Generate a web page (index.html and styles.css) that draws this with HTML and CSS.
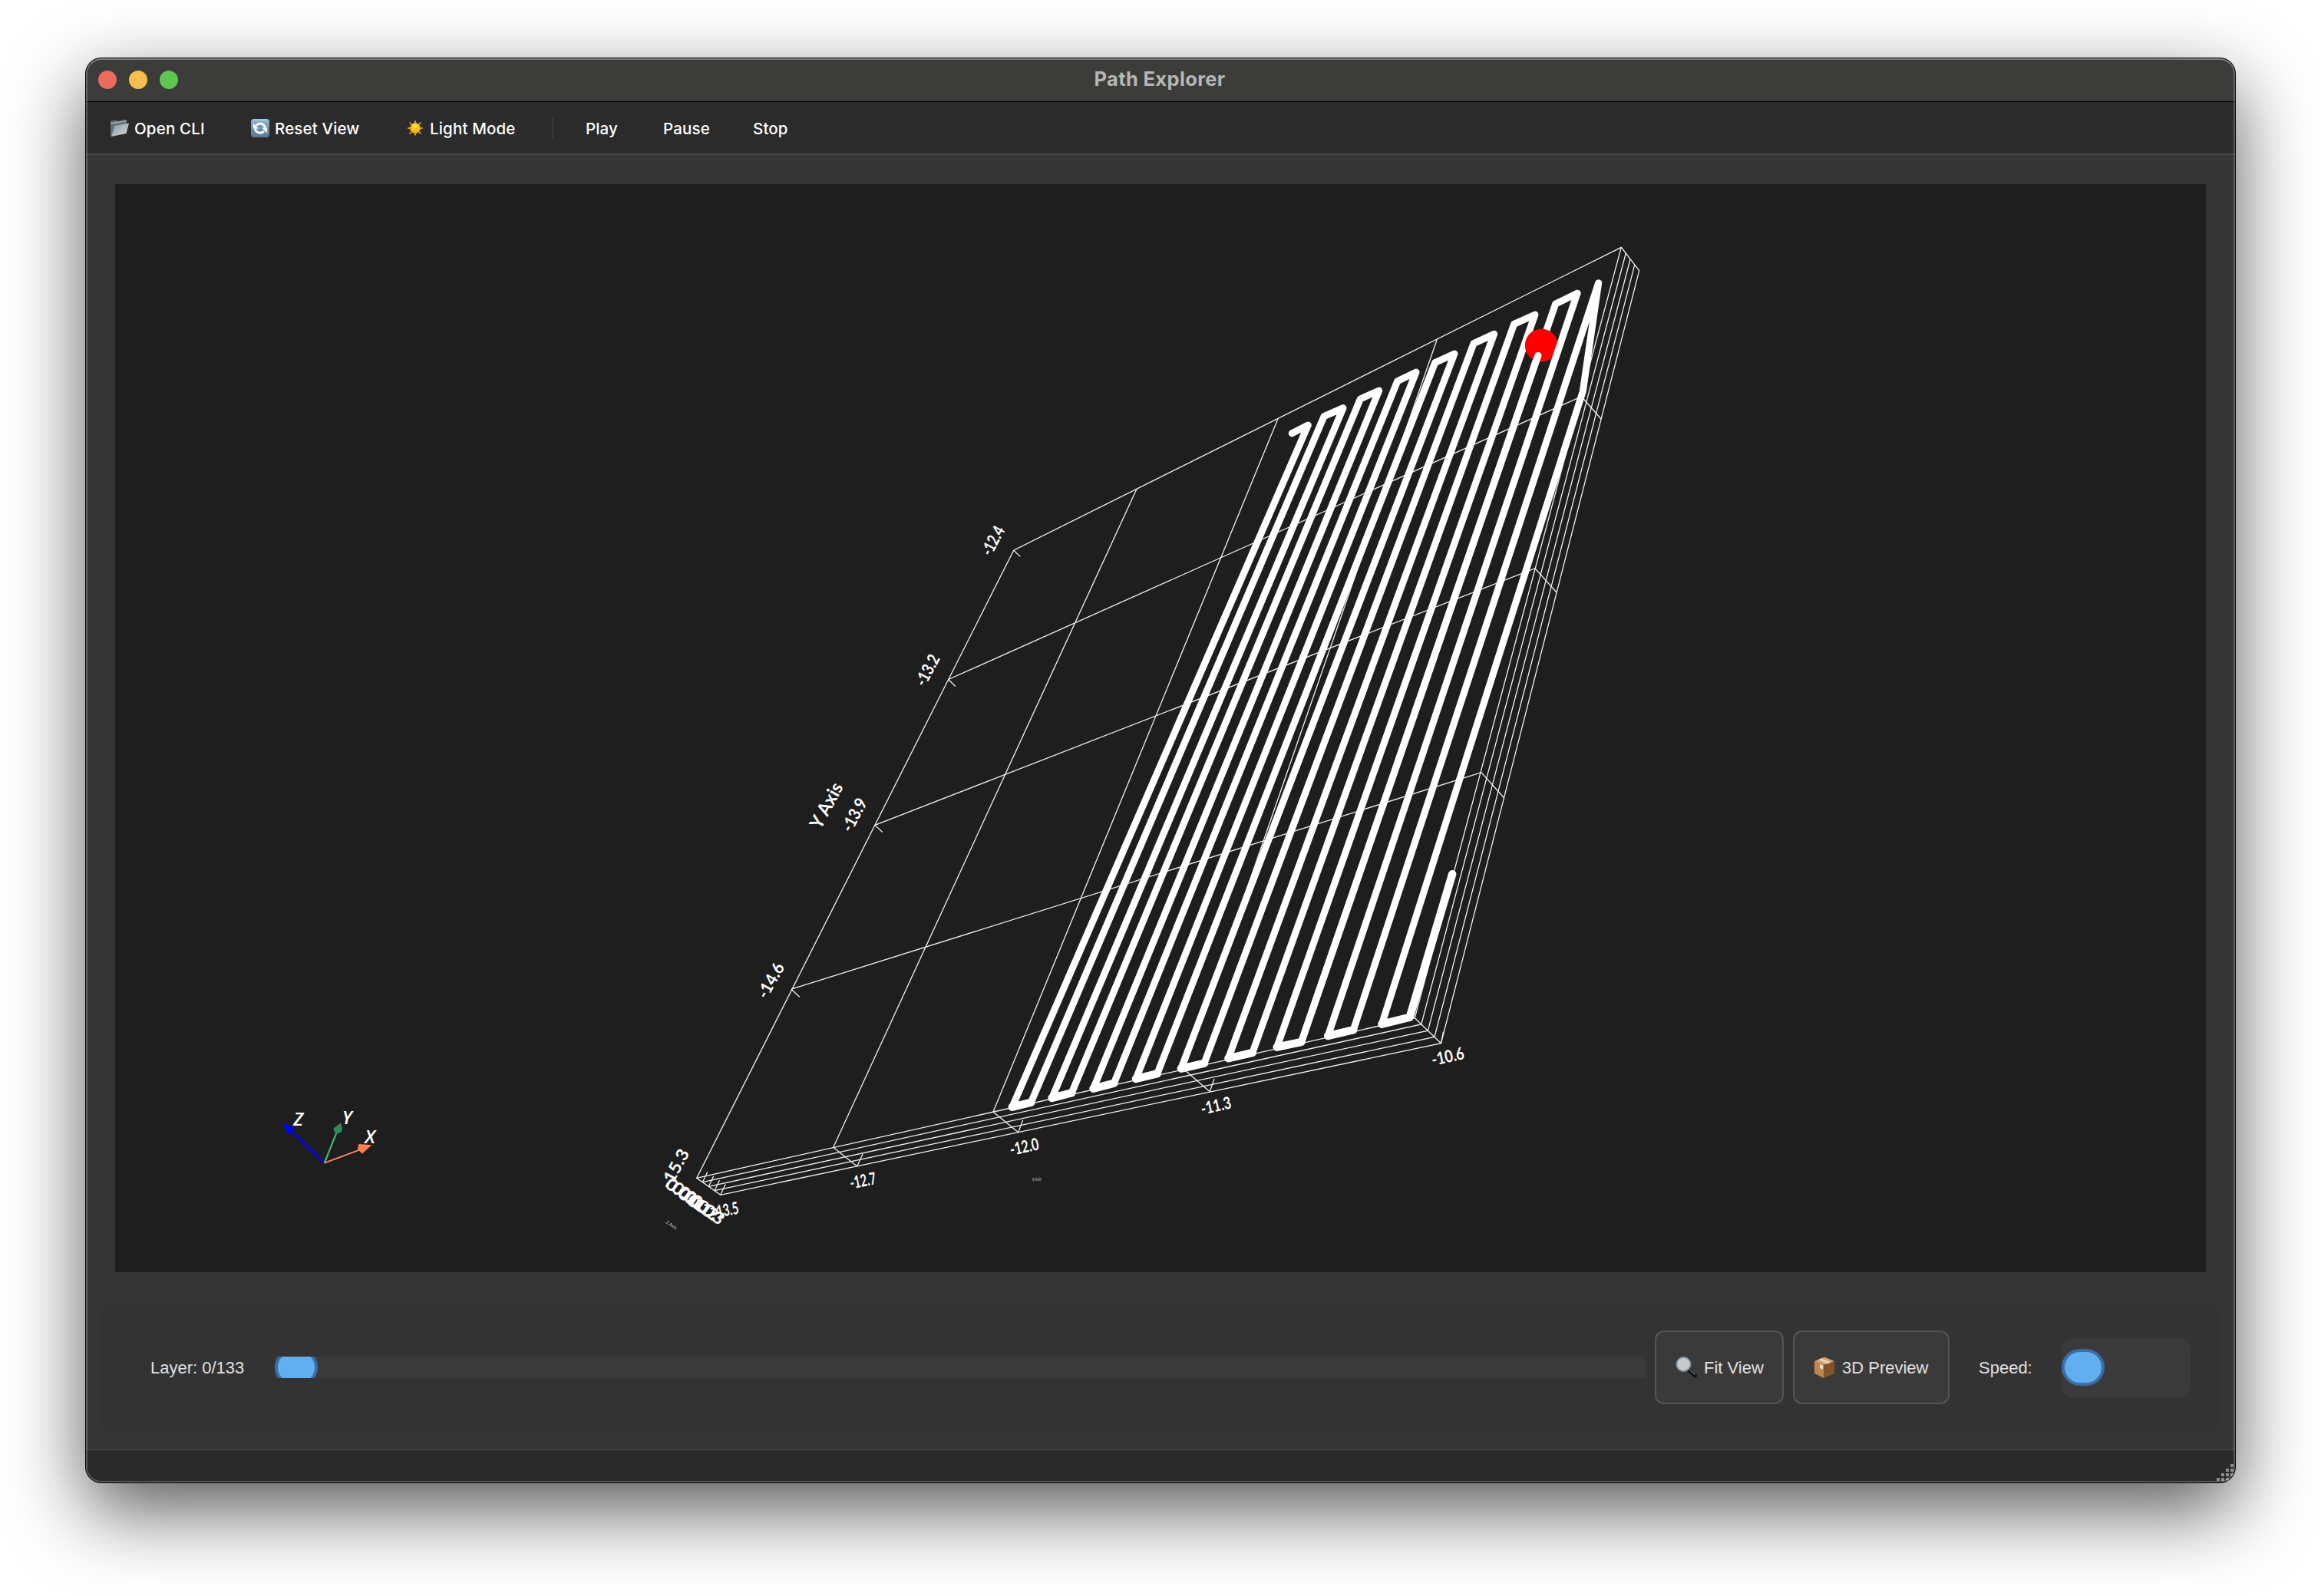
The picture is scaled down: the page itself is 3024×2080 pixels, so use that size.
FILE: index.html
```html
<!DOCTYPE html>
<html lang="en">
<head>
<meta charset="utf-8">
<title>Path Explorer</title>
<link rel="stylesheet" href="styles.css">
</head>
<body>
<main class="window">
  <header class="titlebar">
    <div class="lights"><i class="light close"></i><i class="light minimize"></i><i class="light maximize"></i></div>
    <h1 class="title">Path Explorer</h1>
  </header>
  <nav class="toolbar">
    <div class="tool open">
      <svg class="tool-icon" viewBox="0 0 24 24"><defs><linearGradient id="fold" x1="0" y1="0" x2="1" y2="1"><stop offset="0" stop-color="#8b98a3"/><stop offset="1" stop-color="#d5dade"/></linearGradient></defs><path d="M0 3.500l1-1 7-1 1.500 1.500L20 .500l1 1.500v5L3 22.500 0 22z" fill="#62707c"/><path d="M0 5l21-3v1.500L0 7z" fill="#9aa7b1"/><path d="M5.500 9L24 5.500 20.500 19 1 23z" fill="url(#fold)"/></svg>
      <span class="tool-text">Open CLI</span></div>
    <div class="tool reset">
      <svg class="tool-icon" viewBox="0 0 24 24"><defs><linearGradient id="blue" x1="0" y1="0" x2="0" y2="1"><stop offset="0" stop-color="#a9c7de"/><stop offset=".25" stop-color="#7ba1c1"/><stop offset="1" stop-color="#56799a"/></linearGradient></defs><rect width="24" height="24" rx="4" fill="url(#blue)"/><g fill="none" stroke="#fff" stroke-width="2.800"><path d="M7 8.500A6.800 6.800 0 0 1 18.700 11.500"/><path d="M17 16A6.800 6.800 0 0 1 5.300 12.500"/></g><path d="M3 5.500v7h7zM21 18.500v-7h-7z" fill="#fff"/></svg>
      <span class="tool-text">Reset View</span></div>
    <div class="tool mode">
      <svg class="tool-icon" viewBox="0 0 24 24"><defs><radialGradient id="sun" cy=".3"><stop offset="0" stop-color="#fff04a"/><stop offset="1" stop-color="#fbb00d"/></radialGradient></defs><g fill="#f5a01c"><path d="M12 1l1.400 4h-2.800zM12 23l1.400-4h-2.800zM1 12l4-1.400v2.800zM23 12l-4-1.400v2.800zM3.800 3.800l4 2.200-1.800 1.800zM20.200 3.800L16.200 6l1.800 1.800zM3.800 20.200L7.800 18 6 16.200zM20.200 20.200L16.200 18l1.800-1.800z"/></g><circle cx="12" cy="12" r="6.800" fill="url(#sun)"/></svg>
      <span class="tool-text">Light Mode</span></div>
    <div class="separator"></div>
    <div class="tool play"><span class="tool-text">Play</span></div>
    <div class="tool pause"><span class="tool-text">Pause</span></div>
    <div class="tool"><span class="tool-text">Stop</span></div>
  </nav>
  <section class="content">
    <svg class="plot" viewBox="150 240 2724 1418">
      <g class="grid">
        <path d="M907.700 1535.300L1320.700 717.200 2112.300 322.300 2135.700 352.700 1877.500 1359.700 938.700 1557.300z"/>
        <path d="M907.700 1535.300L1843.300 1326.700 2112.300 322.300M1843.300 1326.700L1877.500 1359.700"/>
        <path d="M915.300 1540.700L1851.800 1335 2118.300 330M923.300 1546.300L1860.400 1343.200 2124 338M931 1551.700L1869 1351.500 2129.700 345.300"/>
        <path d="M1116.700 1520L1085.700 1495.300 1481 637.300M1326.700 1475.700L1294 1449 1665 545.700M1576.300 1422.700L1543 1394 1872.300 442.300"/>
        <path d="M1235.700 885.500L2060.500 516.700 2086 546M1140 1075.400L2000 740.700 2028 772M1031 1289.200L1930 1006.700 1959.300 1039.500"/>
        <path d="M1116.700 1520l7.300-16M1326.700 1475.700l6-16M1576.300 1422.700l5.700-16.700M1877.500 1359.700l3-15M915.300 1540.700l6.500-13.500M923.300 1546.300l6.500-13.500M931 1551.700l6.500-13.500M938.700 1557.300l6.500-14"/>
        <path d="M1320.700 717.200l8.700 8.200M1235.700 885.500l9 9M1140 1075.400l9.700 9.100M1031 1289.200l10.700 10"/>
      </g>
      <g class="toolpath">
        <path d="M1683.300 564.700L1704.300 554 1318.800 1442.700 1343.300 1436.700 1725 542.700 1750 531.700 1370.600 1431 1396.300 1424.300 1772.300 520 1796.700 509 1424.500 1418.700 1451.400 1411.700 1820.700 496.700 1845 485 1480 1406 1507.800 1399.300 1869.700 472.700 1895 461 1538.800 1392.700 1569 1385.700 1920 447.700 1946.700 435.300 1600.400 1379.300 1631.800 1372 1972.700 422.300 2000 410 1663.700 1364.700 1695.500 1358 2026.700 396 2055 382.300"/>
        <circle class="marker" cx="2008.300" cy="450" r="21.500"/>
        <path d="M2004 463.300L1695.500 1358M2055 382.300L1730.200 1350 1763.300 1342.300 2082.700 368.700 2062.300 510 1800.400 1334.700 1836.700 1325.700 1892.200 1139.300"/>
        <path class="turns" d="M1318.800 1442.700L1343.300 1436.700M1370.600 1431L1396.300 1424.300M1424.500 1418.700L1451.400 1411.700M1480 1406L1507.800 1399.300M1538.800 1392.700L1569 1385.700M1600.400 1379.300L1631.800 1372M1663.700 1364.700L1695.500 1358M1730.200 1350L1763.300 1342.300M1800.400 1334.700L1836.700 1325.700 1892.200 1139.300"/>
      </g>
      <g class="labels">
        <text transform="translate(1867 1389) rotate(-12.500)" textLength="43" lengthAdjust="spacingAndGlyphs">-10.6</text>
        <text transform="translate(1566.500 1453) rotate(-13)" textLength="40" lengthAdjust="spacingAndGlyphs">-11.3</text>
        <text transform="translate(1317.500 1506) rotate(-12)" textLength="38" lengthAdjust="spacingAndGlyphs">-12.0</text>
        <text transform="translate(1109 1549.500) rotate(-11)" textLength="34" lengthAdjust="spacingAndGlyphs">-12.7</text>
        <text transform="translate(930 1588) rotate(-11)" textLength="34" lengthAdjust="spacingAndGlyphs">-13.5</text>
        <text transform="translate(1291 726) rotate(-62)" textLength="40" lengthAdjust="spacingAndGlyphs">-12.4</text>
        <text transform="translate(1205 896) rotate(-62)" textLength="43" lengthAdjust="spacingAndGlyphs">-13.2</text>
        <text transform="translate(1109 1086) rotate(-62)" textLength="46" lengthAdjust="spacingAndGlyphs">-13.9</text>
        <text transform="translate(999 1303) rotate(-61)" textLength="49" lengthAdjust="spacingAndGlyphs">-14.6</text>
        <text transform="translate(873 1551) rotate(-62)" textLength="55" lengthAdjust="spacingAndGlyphs">-15.3</text>
        <text class="axis" transform="translate(1069 1082) rotate(-62)" textLength="64" lengthAdjust="spacingAndGlyphs">Y Axis</text>
        <text transform="translate(865 1546) rotate(37)" textLength="50" lengthAdjust="spacingAndGlyphs">0.00</text>
        <text transform="translate(873 1551) rotate(37)" textLength="50" lengthAdjust="spacingAndGlyphs">0.01</text>
        <text transform="translate(881 1556.500) rotate(37)" textLength="50" lengthAdjust="spacingAndGlyphs">0.01</text>
        <text transform="translate(889 1562) rotate(37)" textLength="50" lengthAdjust="spacingAndGlyphs">0.02</text>
        <text transform="translate(897 1567.500) rotate(37)" textLength="50" lengthAdjust="spacingAndGlyphs">0.03</text>
        <text class="tiny" transform="translate(1345 1539.500) rotate(-5)" textLength="12" lengthAdjust="spacingAndGlyphs">X Axis</text>
        <text class="tiny" transform="translate(867 1594) rotate(33)" textLength="16" lengthAdjust="spacingAndGlyphs">Z Axis</text>
      </g>
      <g class="triad" transform="translate(340 1420) scale(.33333)">
        <path d="M248 287L125 168" stroke="#00f" stroke-width="8"/><path d="M85 130L132 152 107 178z" fill="#00f"/>
        <path d="M248 287L299 160" stroke="#3ccb75" stroke-width="6"/><path d="M312 130L283 152 288 167 300 172 315 166 318 153z" fill="#2e8b57"/>
        <path d="M248 287L385 236" stroke="#ff8560" stroke-width="6"/><path d="M433 217L382 213 378 232 395 251z" fill="#ff7f55"/>
        <text x="127" y="140">Z</text><text x="317" y="134">Y</text><text x="406" y="209">X</text>
      </g>
    </svg>
    <div class="controls">
      <span class="layer-label">Layer: 0/133</span>
      <div class="slider layer-slider"><i class="handle"></i></div>
      <div class="button fit">
        <svg class="button-icon" viewBox="0 0 28 28"><path d="M17.500 17.500l8 7.500" stroke="#111" stroke-width="5" stroke-linecap="round"/><path d="M18.500 17l7 6.500" stroke="#5f6c75" stroke-width="1.500"/><circle cx="10.500" cy="10" r="9" fill="#c9c9c9" stroke="#8497a5" stroke-width="1.800"/></svg>
        <span class="button-text">Fit View</span></div>
      <div class="button preview">
        <svg class="button-icon" viewBox="0 0 28 28"><path d="M1 6l12 5v17L1 22z" fill="#bd8650"/><path d="M13 11l14-5v16l-14 6z" fill="#80552c"/><path d="M1 6L14 .500 27 6l-14 5z" fill="#d2a070"/><path d="M6 4l4-1.800L22.500 7.500 18 9.200z" fill="#ecd4b6"/><path d="M8 10l4 1.500v5L8 15z" fill="#e8e2da"/></svg>
        <span class="button-text">3D Preview</span></div>
      <span class="speed-label">Speed:</span>
      <div class="slider speed-slider"><i class="handle"></i></div>
    </div>
  </section>
  <footer class="statusbar">
    <svg class="grip" viewBox="0 0 24 24"><path d="M18 0h4v4h-4zM12 6h4v4h-4zM18 6h4v4h-4zM6 12h4v4H6zM12 12h4v4h-4zM18 12h4v4h-4zM0 18h4v4H0zM6 18h4v4H6zM12 18h4v4h-4z" fill="#8c8c8c"/></svg>
  </footer>
</main>
</body>
</html>
```
FILE: styles.css
```css
* { box-sizing: border-box; }
body {
  margin: 0;
  width: 3024px;
  height: 2080px;
  padding: 76px 112px 148px;
  overflow: hidden;
  background: #fff;
  font-family: "Liberation Sans", Arial, sans-serif;
}
.window {
  position: relative;
  display: flex;
  flex-direction: column;
  width: 2800px;
  height: 1856px;
  overflow: hidden;
  border-radius: 20px;
  background: #353535;
  box-shadow: 0 0 0 1px #000, 0 36px 100px rgba(0, 0, 0, .66);
}
/* light inner rim, painted above the bars */
.window::after {
  content: "";
  position: absolute;
  inset: 0;
  border: 2px solid rgba(255, 255, 255, .22);
  border-top-color: rgba(255, 255, 255, .35);
  border-radius: 20px;
}
.titlebar {
  display: grid;
  grid-template-columns: 1fr auto 1fr;
  align-items: center;
  height: 57px;
  padding: 0 16px;
  background: #3c3c3a;
  border-bottom: 1px solid #000;
}
.lights { display: flex; gap: 16px; }
.light { width: 24px; height: 24px; border-radius: 50%; }
.close { background: #ed6a5f; }
.minimize { background: #f5bf4f; }
.maximize { background: #61c554; }
.title {
  margin: 0;
  padding: 0 2px 2px 0;
  color: #b6b6b4;
  font: 700 25.500px/1 Inter, sans-serif;
  letter-spacing: .35px;
}
.toolbar {
  display: flex;
  align-items: center;
  height: 69px;
  padding: 1px 0 0 32px;
  background: #2b2b2b;
  border-bottom: 2px solid #444;
  color: #fff;
  font: 500 20.500px/1 Inter, sans-serif;
  letter-spacing: .15px;
}
.tool { display: flex; align-items: center; gap: 7px; white-space: nowrap; }
.tool-text { padding-top: 3px; }
.tool-icon { width: 24px; height: 24px; }
.open { width: 183px; }
.reset { width: 202px; }
.mode { width: 190px; }
.separator { width: 2px; height: 26px; margin-right: 42px; background: #3a3a3a; }
.play { width: 101px; }
.pause { width: 117px; }
.content {
  flex: 1;
  display: flex;
  flex-direction: column;
  gap: 38px;
  padding: 38px 20px 20px;
}
.plot { display: block; width: 2724px; height: 1418px; margin: 0 18px; background: #1e1e1e; }
.grid path { fill: none; stroke: #f2f2f2; stroke-width: 1.300; }
.toolpath path { fill: none; stroke: #fff; stroke-width: 9; stroke-linecap: round; stroke-linejoin: round; }
.toolpath .turns { stroke-width: 10.400; }
.marker { fill: #f00; }
.labels { fill: #fff; font: 700 22px Lato, sans-serif; }
.labels .axis { font-size: 24px; }
.labels .tiny { font-size: 6px; fill: #aaa; }
.triad text { fill: #fff; font: italic 600 72px "Open Sans", sans-serif; }
.controls {
  flex: 1;
  display: flex;
  align-items: center;
  padding: 0 38px 0 64px;
  border-radius: 16px;
  background: #333;
  color: #e0e0e0;
  font-size: 22px;
  white-space: nowrap;
}
.layer-label { width: 162px; padding-top: 1px; }
.slider { position: relative; overflow: hidden; background: #3a3a3a; }
.layer-slider { flex: 1; height: 28px; }
.speed-slider { width: 168px; height: 80px; border-radius: 16px; }
.handle {
  position: absolute;
  top: 50%;
  left: 0;
  width: 56px;
  height: 48px;
  border: 4px solid #3b6ea5;
  border-radius: 24px;
  background: #61afef;
  transform: translateY(-50%);
}
.button {
  display: flex;
  align-items: center;
  gap: 9px;
  height: 96px;
  margin-left: 12px;
  padding-left: 25px;
  border: 2px solid #555;
  border-radius: 12px;
  background: #3a3a3a;
}
.button-icon { width: 28px; height: 28px; }
.button-text { padding-top: 1px; }
.fit { width: 168px; }
.preview { width: 204px; }
.speed-label { width: 108px; margin-left: 38px; padding-top: 1px; }
.statusbar {
  display: flex;
  align-items: flex-end;
  justify-content: flex-end;
  height: 44px;
  background: #2a2a2a;
  border-top: 2px solid #444;
}
.grip { width: 24px; height: 24px; }
```
